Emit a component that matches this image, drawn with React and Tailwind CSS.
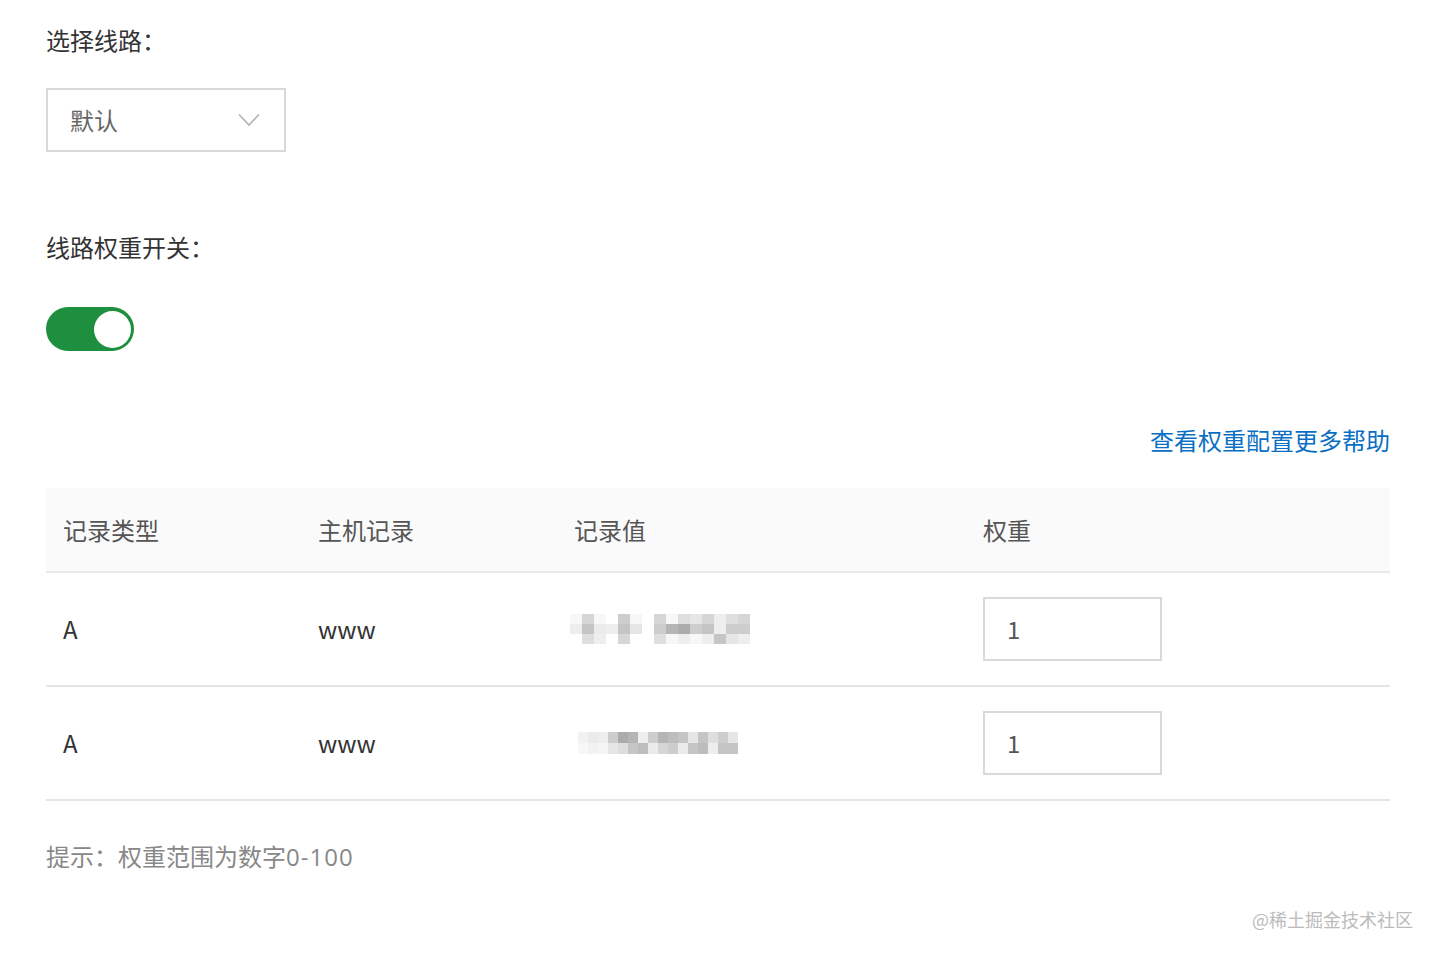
import React, { useState } from 'react';

const font = { fontFamily: '"Noto Sans CJK SC", "Noto Sans", sans-serif' };

// pixelated (blurred) record values
const mosaic1 = [
  [0.05, 0.25, 0.05, 0.0, 0.3, 0.05, 0.0, 0.25, 0.05, 0.2, 0.15, 0.25, 0.1, 0.2, 0.25],
  [0.1, 0.35, 0.12, 0.1, 0.35, 0.15, 0.0, 0.3, 0.45, 0.5, 0.3, 0.35, 0.1, 0.3, 0.3],
  [0.0, 0.2, 0.1, 0.0, 0.25, 0.0, 0.0, 0.2, 0.05, 0.1, 0.05, 0.1, 0.35, 0.15, 0.1],
];
const mosaic2 = [
  [0.08, 0.12, 0.1, 0.3, 0.5, 0.45, 0.1, 0.3, 0.45, 0.4, 0.35, 0.15, 0.35, 0.2, 0.3, 0.15],
  [0.05, 0.08, 0.06, 0.15, 0.2, 0.35, 0.4, 0.12, 0.25, 0.3, 0.12, 0.35, 0.4, 0.1, 0.35, 0.35],
];

const Mosaic = ({ data, cellW, cellH }) => (
  <div className="flex flex-col">
    {data.map((row, i) => (
      <div key={i} className="flex">
        {row.map((v, j) => (
          <div
            key={j}
            style={{ width: cellW, height: cellH, backgroundColor: `rgba(90,90,90,${v})` }}
          />
        ))}
      </div>
    ))}
  </div>
);

const rows = [
  { type: 'A', host: 'www', mosaic: <div className="ml-[-4px]"><Mosaic data={mosaic1} cellW={12} cellH={10} /></div>, weight: '1' },
  { type: 'A', host: 'www', mosaic: <div className="ml-[4px]"><Mosaic data={mosaic2} cellW={10} cellH={11} /></div>, weight: '1' },
];

const App = () => {
  const [on, setOn] = useState(true);

  return (
    <div className="min-h-[954px] bg-white pl-[46px] pr-[48px] pt-[24px]" style={font}>
      <div className="text-[24px] leading-[32px] text-[#333]">选择线路：</div>

      <div className="mt-[32px] flex h-[64px] w-[240px] items-center justify-between border-2 border-[#d9d9d9] pl-[22px] pr-[24px]">
        <span className="text-[24px] text-[#666]">默认</span>
        <svg width="22" height="14" viewBox="0 0 22 14" fill="none">
          <path d="M1 1.5 L11 12 L21 1.5" stroke="#b3b3b3" strokeWidth="1.6" />
        </svg>
      </div>

      <div className="mt-[79px] text-[24px] leading-[32px] text-[#333]">线路权重开关：</div>

      <button
        onClick={() => setOn(!on)}
        className={`mt-[44px] flex h-[44px] w-[88px] items-center rounded-full px-[3px] ${on ? 'justify-end bg-[#1e8f3e]' : 'justify-start bg-[#ccc]'}`}
      >
        <span className="block h-[37px] w-[37px] rounded-full bg-white" />
      </button>

      <div className="mt-[73px] flex justify-end">
        <a className="text-[24px] leading-[32px] text-[#0a6fc4]">查看权重配置更多帮助</a>
      </div>

      <div className="mt-[32px]">
        <div className="flex h-[85px] items-center border-b-2 border-[#e8e8e8] bg-[#fafafa] text-[24px] text-[#555]">
          <div className="w-[255px] pl-[17px]">记录类型</div>
          <div className="w-[256px] pl-[17px]">主机记录</div>
          <div className="w-[409px] pl-[17px]">记录值</div>
          <div className="flex-1 pl-[17px]">权重</div>
        </div>
        {rows.map((r, i) => (
          <div key={i} className="flex h-[114px] items-center border-b-2 border-[#e5e5e5] text-[24px] text-[#333]">
            <div className="w-[255px] pl-[17px]">{r.type}</div>
            <div className="w-[256px] pl-[17px]">{r.host}</div>
            <div className="w-[409px] pl-[17px]">{r.mosaic}</div>
            <div className="flex-1 pl-[17px]">
              <div className="flex h-[64px] w-[179px] items-center border-2 border-[#d9d9d9] pl-[22px] text-[24px] text-[#555]">
                {r.weight}
              </div>
            </div>
          </div>
        ))}
      </div>

      <div className="mt-[39px] text-[24px] leading-[32px] text-[#888]">
        提示：权重范围为数字<span className="tracking-[1px]" style={{ fontFamily: '"Open Sans", sans-serif' }}>0-100</span>
      </div>

      <div className="mr-[-23px] mt-[34px] text-right text-[18px] leading-[24px] text-[#bbb]">@稀土掘金技术社区</div>
    </div>
  );
};

export default App;
